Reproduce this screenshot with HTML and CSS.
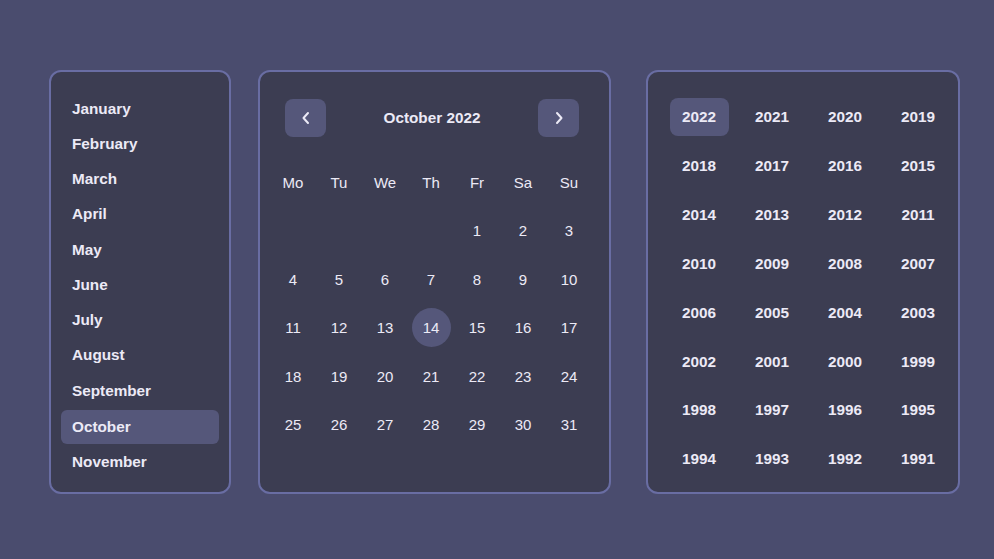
FILE: index.html
```html
<!DOCTYPE html>
<html>
<head>
<meta charset="utf-8">
<link rel="stylesheet" href="styles.css">
</head>
<body>
<div class="stage">
  <div class="panel months">
    <div class="month">January</div>
    <div class="month">February</div>
    <div class="month">March</div>
    <div class="month">April</div>
    <div class="month">May</div>
    <div class="month">June</div>
    <div class="month">July</div>
    <div class="month">August</div>
    <div class="month">September</div>
    <div class="month active">October</div>
    <div class="month">November</div>
  </div>

  <div class="panel calendar">
    <div class="cal-head">
      <button class="nav"><svg width="12" height="14" viewBox="0 0 12 14"><path d="M8 2 L3.5 7 L8 12" fill="none" stroke="#eceaf6" stroke-width="2" stroke-linecap="round" stroke-linejoin="round"/></svg></button>
      <div class="cal-title">October 2022</div>
      <button class="nav"><svg width="12" height="14" viewBox="0 0 12 14"><path d="M4 2 L8.5 7 L4 12" fill="none" stroke="#eceaf6" stroke-width="2" stroke-linecap="round" stroke-linejoin="round"/></svg></button>
    </div>
    <div class="grid weekdays">
      <span>Mo</span><span>Tu</span><span>We</span><span>Th</span><span>Fr</span><span>Sa</span><span>Su</span>
    </div>
    <div class="grid days">
      <span></span><span></span><span></span><span></span><span>1</span><span>2</span><span>3</span>
      <span>4</span><span>5</span><span>6</span><span>7</span><span>8</span><span>9</span><span>10</span>
      <span>11</span><span>12</span><span>13</span><span class="today">14</span><span>15</span><span>16</span><span>17</span>
      <span>18</span><span>19</span><span>20</span><span>21</span><span>22</span><span>23</span><span>24</span>
      <span>25</span><span>26</span><span>27</span><span>28</span><span>29</span><span>30</span><span>31</span>
    </div>
  </div>

  <div class="panel years">
    <span class="year active">2022</span><span class="year">2021</span><span class="year">2020</span><span class="year">2019</span>
    <span class="year">2018</span><span class="year">2017</span><span class="year">2016</span><span class="year">2015</span>
    <span class="year">2014</span><span class="year">2013</span><span class="year">2012</span><span class="year">2011</span>
    <span class="year">2010</span><span class="year">2009</span><span class="year">2008</span><span class="year">2007</span>
    <span class="year">2006</span><span class="year">2005</span><span class="year">2004</span><span class="year">2003</span>
    <span class="year">2002</span><span class="year">2001</span><span class="year">2000</span><span class="year">1999</span>
    <span class="year">1998</span><span class="year">1997</span><span class="year">1996</span><span class="year">1995</span>
    <span class="year">1994</span><span class="year">1993</span><span class="year">1992</span><span class="year">1991</span>
  </div>
</div>
</body>
</html>
```

FILE: styles.css
```css
* { box-sizing: border-box; }
html, body {
  margin: 0;
  height: 100%;
}
body {
  background: #4a4c6e;
  font-family: "Liberation Sans", Arial, sans-serif;
  color: #eceaf6;
  font-size: 15px;
}
.stage {
  display: flex;
  align-items: flex-start;
  padding: 70px 0 0 49px;
}
.panel {
  height: 424px;
  background: #3c3d52;
  border: 2px solid #696da3;
  border-radius: 12px;
}
.months {
  width: 182px;
  padding: 18.5px 10px 0 10px;
  overflow: hidden;
}
.month {
  height: 35.25px;
  line-height: 35.25px;
  padding-left: 11px;
  font-weight: bold;
  font-size: 15.3px;
  border-radius: 6px;
}
.month.active {
  background: #55577a;
  height: 34px;
  line-height: 34px;
  margin-top: 2.5px;
}
.calendar {
  width: 353px;
  margin-left: 27px;
  padding: 27px 30px 0 10px;
}
.cal-head {
  display: flex;
  align-items: center;
  justify-content: space-between;
  padding-left: 15px;
  height: 38px;
}
.nav {
  width: 41px;
  height: 38px;
  border: 0;
  border-radius: 8px;
  background: #55577a;
  display: flex;
  align-items: center;
  justify-content: center;
  padding: 0;
}
.cal-title {
  font-weight: bold;
  font-size: 15.3px;
}
.grid {
  display: grid;
  grid-template-columns: repeat(7, 46px);
  grid-auto-rows: 48.5px;
  align-items: center;
  justify-items: center;
}
.weekdays {
  margin-top: 20.75px;
}
.days span {
  width: 39px;
  height: 39px;
  line-height: 39px;
  text-align: center;
  border-radius: 50%;
}
.days .today {
  background: #55577a;
}
.years {
  width: 314px;
  margin-left: 35px;
  padding: 21px 0 0 14.5px;
  display: grid;
  grid-template-columns: repeat(4, 73px);
  grid-auto-rows: 48.85px;
  align-items: center;
  justify-items: center;
  align-content: start;
}
.year {
  width: 59px;
  height: 38px;
  line-height: 38px;
  text-align: center;
  font-weight: bold;
  font-size: 15.3px;
  border-radius: 8px;
}
.year.active {
  background: #55577a;
}
```
